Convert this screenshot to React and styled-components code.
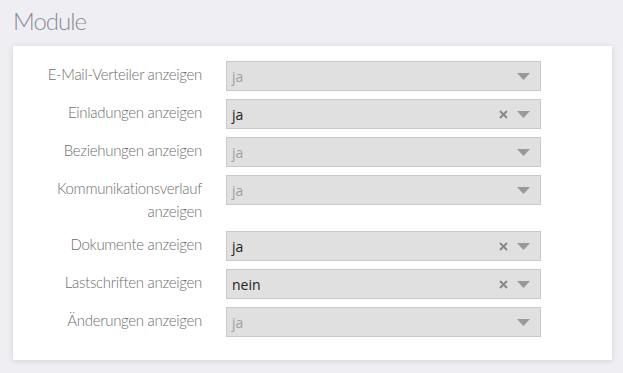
import React from "react";
import styled, { createGlobalStyle } from "styled-components";

const Global = createGlobalStyle`
  html, body { margin: 0; padding: 0; background: #efeff3; }
  body { width: 623px; height: 373px; overflow: hidden; }
`;

const Page = styled.div`
  padding: 6px 11px 0 8px;
`;

const Title = styled.h2`
  margin: 0 0 10px 0;
  padding-left: 5px;
  font-family: "Lato", sans-serif;
  font-weight: 300;
  font-size: 24px;
  line-height: 30px;
  color: #8b8b96;
  letter-spacing: -1px;
`;

const Card = styled.div`
  margin-left: 5px;
  background: #fff;
  box-shadow: 0 1px 6px rgba(0, 0, 0, 0.12);
  padding: 15px 0 23px 0;
  display: flex;
  flex-direction: column;
  gap: 8px;
`;

const Row = styled.div`
  display: grid;
  grid-template-columns: 189px 315px;
  column-gap: 24px;
  align-items: start;
`;

const Label = styled.div`
  text-align: right;
  font-family: "Lato", sans-serif;
  font-weight: 300;
  font-size: 15px;
  line-height: 23px;
  padding-top: 2px;
  color: #6e6e6e;
  letter-spacing: -0.3px;
`;

const Select = styled.div`
  box-sizing: border-box;
  height: 30px;
  border: 1px solid #c9c9c9;
  background: #e0e0e0;
  display: flex;
  align-items: center;
  padding: 0 10px 0 5px;
  font-family: "Open Sans", sans-serif;
  font-size: 14px;
  color: ${(p) => (p.$placeholder ? "#a0a0a0" : "#222")};
`;

const Value = styled.span`
  flex: 1;
`;

const Clear = styled.span`
  width: 10px;
  display: flex;
  justify-content: center;
  margin-right: 9px;
`;

const Arrow = () => (
  <svg width="13" height="7" viewBox="0 0 13 7">
    <path d="M0 0 L13 0 L6.5 7 Z" fill="#999" />
  </svg>
);

const X = () => (
  <svg width="9" height="9" viewBox="0 0 9 9">
    <path d="M1 1 L8 8 M8 1 L1 8" stroke="#888" strokeWidth="2" />
  </svg>
);

const rows = [
  { label: "E-Mail-Verteiler anzeigen", value: "ja", ph: true },
  { label: "Einladungen anzeigen", value: "ja", ph: false },
  { label: "Beziehungen anzeigen", value: "ja", ph: true },
  { label: "Kommunikationsverlauf anzeigen", value: "ja", ph: true },
  { label: "Dokumente anzeigen", value: "ja", ph: false },
  { label: "Lastschriften anzeigen", value: "nein", ph: false },
  { label: "Änderungen anzeigen", value: "ja", ph: true },
];

export default function App() {
  return (
    <>
      <Global />
      <Page>
        <Title>Module</Title>
        <Card>
          {rows.map((r) => (
            <Row key={r.label}>
              <Label>{r.label}</Label>
              <Select $placeholder={r.ph}>
                <Value>{r.value}</Value>
                {!r.ph && (
                  <Clear>
                    <X />
                  </Clear>
                )}
                <Arrow />
              </Select>
            </Row>
          ))}
        </Card>
      </Page>
    </>
  );
}
